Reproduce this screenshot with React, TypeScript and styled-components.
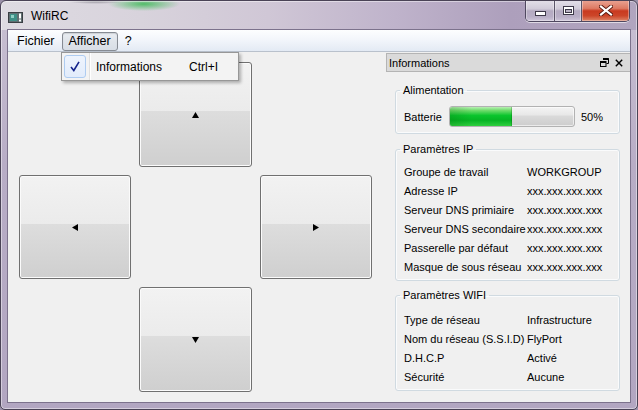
import React from "react";
import styled, { createGlobalStyle } from "styled-components";

const GlobalStyle = createGlobalStyle`
  html, body { margin: 0; padding: 0; }
  body { width: 638px; height: 410px; overflow: hidden; background: #9a90a8; }
  #root { width: 638px; height: 410px; }
`;

const Window = styled.div`
  position: relative;
  box-sizing: border-box;
  width: 638px;
  height: 410px;
  display: flex;
  flex-direction: column;
  border: 1px solid #4a4356;
  border-radius: 6px 6px 5px 5px;
  overflow: hidden;
  font-family: "Liberation Sans", Arial, sans-serif;
  background:
    radial-gradient(ellipse 36px 7px at 143px 3px, rgba(60, 185, 85, 0.85), rgba(60, 185, 85, 0)) no-repeat,
    radial-gradient(ellipse 30px 3px at 95px 0px, rgba(70, 70, 80, 0.55), rgba(70, 70, 80, 0)) no-repeat,
    linear-gradient(90deg, #dedbe2 0%, #d8d3dc 22%, #d0c7d6 42%, #bfb3cb 62%, #ad9fbc 80%, #b1a5bf 100%) 0 0 / 100% 29px no-repeat,
    linear-gradient(180deg, #c9c1d3 0%, #b8adc6 40%, #b2a6c1 100%);
  box-shadow: inset 0 0 0 1px rgba(255, 255, 255, 0.45);
`;

const TitleBar = styled.div`
  height: 28px;
  flex: none;
  display: flex;
  align-items: flex-start;
  padding: 0 7px 0 7px;
`;

const AppIcon = styled.svg`
  margin-top: 6px;
  flex: none;
`;

const Title = styled.div`
  margin: 7px 0 0 7px;
  font-size: 12px;
  line-height: 16px;
  color: #000;
`;

const CaptionGroup = styled.div`
  margin-left: auto;
  margin-top: -1px;
  height: 21px;
  display: flex;
  border: 1px solid #4f4860;
  border-top: none;
  border-radius: 0 0 5px 5px;
  overflow: hidden;
  box-shadow: 0 1px 0 rgba(255, 255, 255, 0.6);
`;

const CaptionButton = styled.div<{ $w: number; $close?: boolean }>`
  width: ${(p) => p.$w}px;
  height: 100%;
  display: flex;
  align-items: center;
  justify-content: center;
  box-sizing: border-box;
  border-right: ${(p) => (p.$close ? "none" : "1px solid #5b5468")};
  box-shadow: inset 0 0 0 1px rgba(255, 255, 255, 0.35);
  background: ${(p) =>
    p.$close
      ? "linear-gradient(180deg, #eaa595 0%, #dd7a63 40%, #c93a20 52%, #cc4529 75%, #de8668 100%)"
      : "linear-gradient(180deg, #e4e0e9 0%, #d1cbd9 42%, #b4aac1 52%, #b9afc7 80%, #cfc6da 100%)"};
`;

const Client = styled.div`
  margin: 0 6px 6px 6px;
  border: 1px solid #7c728c;
  flex: 1;
  min-height: 0;
  display: flex;
  flex-direction: column;
  background: #f0f0f0;
`;

const MenuBar = styled.div`
  height: 21px;
  flex: none;
  display: flex;
  align-items: flex-start;
  padding-left: 2px;
  background: linear-gradient(180deg, #fdfeff 0%, #f3f6fb 45%, #e3eaf4 100%);
  border-bottom: 1px solid #b9c1cc;
`;

const MenuItem = styled.div<{ $active?: boolean }>`
  margin-top: 2px;
  height: 17px;
  padding: 0 6px;
  font-size: 12.5px;
  line-height: 17px;
  color: #000;
  border: 1px solid ${(p) => (p.$active ? "#868b93" : "transparent")};
  border-radius: 3px;
  background: ${(p) =>
    p.$active ? "linear-gradient(180deg, #e9edf2 0%, #dfe4ea 50%, #d8dee6 100%)" : "transparent"};
  box-shadow: ${(p) => (p.$active ? "inset 0 1px 1px rgba(0,0,0,0.12)" : "none")};
`;

const Body = styled.div`
  flex: 1;
  min-height: 0;
  display: flex;
`;

const PadArea = styled.div`
  width: 378px;
  flex: none;
  box-sizing: border-box;
  padding: 10px 0 0 11px;
  display: grid;
  grid-template-columns: 112px 113px 112px;
  grid-template-rows: 105px 104px 105px;
  column-gap: 8px;
  row-gap: 8px;
  align-content: start;
`;

const PadButton = styled.div<{ $col: number; $row: number }>`
  grid-column: ${(p) => p.$col};
  grid-row: ${(p) => p.$row};
  box-sizing: border-box;
  border: 1px solid #707070;
  border-radius: 3px;
  box-shadow: inset 0 0 0 1px #fbfbfb;
  background: linear-gradient(180deg, #f2f2f2 0%, #ebebeb 47%, #dddddd 47%, #cfcfcf 100%);
  display: flex;
  align-items: center;
  justify-content: center;
`;

const Dock = styled.div`
  width: 244px;
  flex: none;
  display: flex;
  flex-direction: column;
  padding: 1px 10px 0 9px;
  box-sizing: border-box;
`;

const DockTitle = styled.div`
  margin: 0 -10px 0 -9px;
  height: 19px;
  box-sizing: border-box;
  display: flex;
  align-items: center;
  padding: 0 7px 0 2px;
  background: #dadada;
  border: 1px solid #b4b4b4;
  border-right: none;
  font-size: 11px;
  color: #000;
`;

const DockTitleText = styled.span`
  flex: 1;
`;

const DockIcons = styled.div`
  display: flex;
  align-items: center;
  gap: 6px;
`;

const Group = styled.fieldset<{ $mt: number; $pt: number; $pb: number }>`
  margin: ${(p) => p.$mt}px 0 0 0;
  padding: ${(p) => p.$pt}px 8px ${(p) => p.$pb}px 8px;
  border: 1px solid #d0dae1;
  border-radius: 3px;
  box-shadow: inset 0 0 0 1px #fafbfc;
  min-width: 0;
`;

const Legend = styled.legend`
  margin-left: -4px;
  padding: 0 3px;
  font-size: 11px;
  line-height: 14px;
  color: #000;
`;

const BatteryRow = styled.div`
  display: flex;
  align-items: center;
  height: 21px;
  font-size: 11px;
  color: #000;
`;

const BatteryLabel = styled.span`
  width: 45px;
  flex: none;
`;

const Progress = styled.div`
  width: 126px;
  height: 21px;
  box-sizing: border-box;
  border: 1px solid #b2b2b2;
  border-radius: 3px;
  overflow: hidden;
  background: linear-gradient(180deg, #f4f4f4 0%, #e8e8e8 40%, #d9d9d9 50%, #cdcdcd 100%);
  box-shadow: inset 0 0 0 1px rgba(255, 255, 255, 0.6);
  flex: none;
`;

const ProgressFill = styled.div`
  height: 100%;
  background:
    linear-gradient(90deg, rgba(0, 80, 0, 0.18) 0%, rgba(0, 80, 0, 0) 35%),
    linear-gradient(180deg, #b9f0b4 0%, #6fdc6c 18%, #0ac52c 45%, #06b424 70%, #2fcf3e 100%);
  box-shadow: inset -1px 0 0 rgba(0, 90, 0, 0.25);
`;

const Percent = styled.span`
  margin-left: 6px;
`;

const InfoGrid = styled.div`
  display: grid;
  grid-template-columns: 123px 1fr;
  grid-auto-rows: 19px;
  align-items: center;
  font-size: 11px;
  color: #000;
  white-space: nowrap;
`;

const Cell = styled.span``;

const Dropdown = styled.div`
  position: absolute;
  left: 60px;
  top: 51px;
  width: 178px;
  height: 29px;
  box-sizing: border-box;
  border: 1px solid #979797;
  background: #f3f3f3;
  box-shadow: 2px 2px 3px rgba(0, 0, 0, 0.28);
  display: flex;
  align-items: center;
  padding-left: 2px;
  font-family: "Liberation Sans", Arial, sans-serif;
  font-size: 12px;
  color: #000;
`;

const CheckBox = styled.div`
  width: 22px;
  height: 23px;
  box-sizing: border-box;
  border: 1px solid #aeccf1;
  border-radius: 3px;
  background: linear-gradient(180deg, #eef4fd 0%, #e2ecfb 100%);
  display: flex;
  align-items: center;
  justify-content: center;
  flex: none;
`;

const Gutter = styled.div`
  width: 2px;
  height: 27px;
  margin-left: 3px;
  border-left: 1px solid #e0e0e0;
  border-right: 1px solid #ffffff;
  box-sizing: border-box;
  flex: none;
`;

const DropLabel = styled.span`
  margin-left: 5px;
  width: 93px;
  flex: none;
`;

const Arrow = ({ dir }: { dir: "up" | "down" | "left" | "right" }) => {
  const pts = {
    up: "3.5,0 7,6 0,6",
    down: "0,0 7,0 3.5,6",
    left: "0,3.5 6,0 6,7",
    right: "0,0 6,3.5 0,7",
  }[dir];
  const w = dir === "up" || dir === "down" ? 7 : 6;
  const h = dir === "up" || dir === "down" ? 6 : 7;
  return (
    <svg width={w} height={h} viewBox={`0 0 ${w} ${h}`}>
      <polygon points={pts} fill="#000" />
    </svg>
  );
};

const ipRows: [string, string][] = [
  ["Groupe de travail", "WORKGROUP"],
  ["Adresse IP", "xxx.xxx.xxx.xxx"],
  ["Serveur DNS primiaire", "xxx.xxx.xxx.xxx"],
  ["Serveur DNS secondaire", "xxx.xxx.xxx.xxx"],
  ["Passerelle par défaut", "xxx.xxx.xxx.xxx"],
  ["Masque de sous réseau", "xxx.xxx.xxx.xxx"],
];

const wifiRows: [string, string][] = [
  ["Type de réseau", "Infrastructure"],
  ["Nom du réseau (S.S.I.D)", "FlyPort"],
  ["D.H.C.P", "Activé"],
  ["Sécurité", "Aucune"],
];

export default function App() {
  const battery = 50;
  return (
    <>
      <GlobalStyle />
      <Window>
        <TitleBar>
          <AppIcon width="16" height="16" viewBox="0 0 16 16">
            <rect x="0.5" y="5.5" width="14" height="10" fill="#5f6f72" stroke="#3a3f44" />
            <rect x="2" y="7" width="7" height="7" fill="#3e8f86" />
            <rect x="3" y="8" width="3" height="3" fill="#8fd0c5" />
            <rect x="11" y="6.5" width="2" height="5" fill="#ffffff" />
            <rect x="11" y="12.5" width="2" height="2" fill="#ffffff" />
          </AppIcon>
          <Title>WifiRC</Title>
          <CaptionGroup>
            <CaptionButton $w={29}>
              <svg width="11" height="5" viewBox="0 0 11 5" style={{ marginTop: 6 }}>
                <rect x="0.5" y="0.5" width="10" height="4" fill="#fff" stroke="#3d3848" />
              </svg>
            </CaptionButton>
            <CaptionButton $w={27}>
              <svg width="11" height="9" viewBox="0 0 11 9">
                <rect x="0.5" y="0.5" width="10" height="8" fill="#fff" stroke="#3d3848" />
                <rect x="2.5" y="3.5" width="6" height="3" fill="#b9b2c4" stroke="#3d3848" />
              </svg>
            </CaptionButton>
            <CaptionButton $w={47} $close>
              <svg width="14" height="11" viewBox="0 0 14 11">
                <path d="M2 1.5 L12 9.5 M12 1.5 L2 9.5" stroke="#5a1a10" strokeWidth="4" strokeLinecap="square" />
                <path d="M2 1.5 L12 9.5 M12 1.5 L2 9.5" stroke="#ffffff" strokeWidth="2.2" strokeLinecap="square" />
              </svg>
            </CaptionButton>
          </CaptionGroup>
        </TitleBar>
        <Client>
          <MenuBar>
            <MenuItem>Fichier</MenuItem>
            <MenuItem $active>Afficher</MenuItem>
            <MenuItem>?</MenuItem>
          </MenuBar>
          <Body>
            <PadArea>
              <PadButton $col={2} $row={1}>
                <Arrow dir="up" />
              </PadButton>
              <PadButton $col={1} $row={2}>
                <Arrow dir="left" />
              </PadButton>
              <PadButton $col={3} $row={2}>
                <Arrow dir="right" />
              </PadButton>
              <PadButton $col={2} $row={3}>
                <Arrow dir="down" />
              </PadButton>
            </PadArea>
            <Dock>
              <DockTitle>
                <DockTitleText>Informations</DockTitleText>
                <DockIcons>
                  <svg width="9" height="9" viewBox="0 0 9 9">
                    <path d="M3 0.5 H8.5 V5.5 H6.5" fill="none" stroke="#000" />
                    <path d="M3 1 H8.5" stroke="#000" strokeWidth="2" />
                    <rect x="0.5" y="3.5" width="5.5" height="5" fill="none" stroke="#000" />
                    <path d="M0.5 4 H6" stroke="#000" strokeWidth="2" />
                  </svg>
                  <svg width="8" height="8" viewBox="0 0 8 8">
                    <path d="M0.8 0.8 L7.2 7.2 M7.2 0.8 L0.8 7.2" stroke="#000" strokeWidth="1.4" />
                  </svg>
                </DockIcons>
              </DockTitle>
              <Group $mt={11} $pt={9} $pb={6}>
                <Legend>Alimentation</Legend>
                <BatteryRow>
                  <BatteryLabel>Batterie</BatteryLabel>
                  <Progress>
                    <ProgressFill style={{ width: `${battery}%` }} />
                  </Progress>
                  <Percent>{battery}%</Percent>
                </BatteryRow>
              </Group>
              <Group $mt={8} $pt={6} $pb={4}>
                <Legend>Paramètres IP</Legend>
                <InfoGrid>
                  {ipRows.map(([k, v]) => (
                    <React.Fragment key={k}>
                      <Cell>{k}</Cell>
                      <Cell>{v}</Cell>
                    </React.Fragment>
                  ))}
                </InfoGrid>
              </Group>
              <Group $mt={7} $pt={8} $pb={4}>
                <Legend>Paramètres WIFI</Legend>
                <InfoGrid>
                  {wifiRows.map(([k, v]) => (
                    <React.Fragment key={k}>
                      <Cell>{k}</Cell>
                      <Cell>{v}</Cell>
                    </React.Fragment>
                  ))}
                </InfoGrid>
              </Group>
            </Dock>
          </Body>
        </Client>
        <Dropdown>
          <CheckBox>
            <svg width="10" height="11" viewBox="0 0 10 11">
              <path d="M1 6 L3.8 9.5 L9 0.8" fill="none" stroke="#16258c" strokeWidth="1.6" />
            </svg>
          </CheckBox>
          <Gutter />
          <DropLabel>Informations</DropLabel>
          <span>Ctrl+I</span>
        </Dropdown>
      </Window>
    </>
  );
}
